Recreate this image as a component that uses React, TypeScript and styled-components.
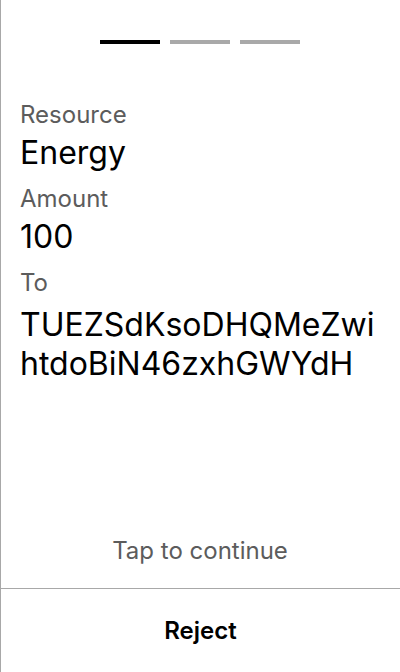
import React from "react";
import styled, { createGlobalStyle } from "styled-components";

const Global = createGlobalStyle`
  html, body { margin: 0; padding: 0; background: #fff; }
  body { font-family: Inter, "Noto Sans", sans-serif; -webkit-font-smoothing: antialiased; }
  * { box-sizing: border-box; }
`;

const Screen = styled.div`
  height: 672px;
  width: 400px;
  display: flex;
  flex-direction: column;
  border-left: 1px solid #a8a8a8;
  background: #fff;
`;

const Main = styled.div`
  flex: 1;
  display: flex;
  flex-direction: column;
  padding: 40px 20px 23px 19px;
`;

const Steps = styled.div`
  display: flex;
  justify-content: center;
  gap: 10px;
  margin-bottom: 57px;
`;

const Step = styled.div<{ $active?: boolean }>`
  width: 60px;
  height: 4px;
  background: ${(p) => (p.$active ? "#000" : "#a9a9a9")};
`;

const Field = styled.div`
  display: flex;
  flex-direction: column;
  margin-bottom: 13px;
`;

const Label = styled.div`
  font-size: 24px;
  line-height: 28px;
  color: #5c5c5c;
  margin-bottom: 5px;
`;

const Value = styled.div<{ $multiline?: boolean }>`
  font-size: 32px;
  line-height: ${(p) => (p.$multiline ? "39px" : "38px")};
  margin-top: ${(p) => (p.$multiline ? "3px" : "0")};
  color: #000;
  word-break: break-all;
`;

const Spacer = styled.div`
  flex: 1;
`;

const Hint = styled.div`
  text-align: center;
  font-size: 24px;
  line-height: 28px;
  color: #5c5c5c;
`;

const Footer = styled.div`
  height: 84px;
  border-top: 1px solid #a8a8a8;
  display: flex;
  align-items: center;
  justify-content: center;
`;

const RejectButton = styled.button`
  background: none;
  border: none;
  font-family: inherit;
  font-size: 24px;
  line-height: 28px;
  font-weight: 600;
  color: #000;
  padding: 0;
`;

export default function App() {
  return (
    <>
      <Global />
      <Screen>
        <Main>
          <Steps>
            <Step $active />
            <Step />
            <Step />
          </Steps>
          <Field>
            <Label>Resource</Label>
            <Value>Energy</Value>
          </Field>
          <Field>
            <Label>Amount</Label>
            <Value>100</Value>
          </Field>
          <Field>
            <Label>To</Label>
            <Value $multiline>TUEZSdKsoDHQMeZwihtdoBiN46zxhGWYdH</Value>
          </Field>
          <Spacer />
          <Hint>Tap to continue</Hint>
        </Main>
        <Footer>
          <RejectButton>Reject</RejectButton>
        </Footer>
      </Screen>
    </>
  );
}
